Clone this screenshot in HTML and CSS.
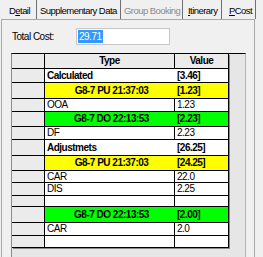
FILE: index.html
```html
<!DOCTYPE html>
<html lang="en">
<head>
    <meta charset="UTF-8">
    <title>PCost</title>
    <link rel="stylesheet" href="styles.css">
</head>
<body>

    <!-- Tab strip -->
    <div class="tabs">
        <div class="tab t-detail">D<u>e</u>tail</div>
        <div class="tab t-supp">Supplementary Data</div>
        <div class="tab t-group disabled">Group Booking</div>
        <div class="tab t-itin"><u>I</u>tinerary</div>
        <div class="tab t-pcost active"><u>P</u>Cost</div>
    </div>

    <!-- Tab page -->
    <div class="panel">
        <div class="total-row">
            <span class="total-label">Total Cost:</span>
            <div class="total-box"><span class="sel">29.71</span></div>
        </div>

        <div class="grid">
            <table class="cost-table">
                <tr class="head r15">
                    <td class="fixed"></td>
                    <td class="type-col">Type</td>
                    <td class="val-col">Value</td>
                </tr>
                <tr class="group r14">
                    <td class="fixed"></td>
                    <td class="merge left">Calculated</td>
                    <td class="val-col">[3.46]</td>
                </tr>
                <tr class="group yellow r16">
                    <td class="fixed"></td>
                    <td class="merge">G8-7 PU 21:37:03</td>
                    <td class="val-col">[1.23]</td>
                </tr>
                <tr class="r13">
                    <td class="fixed"></td>
                    <td>OOA</td>
                    <td class="val-col">1.23</td>
                </tr>
                <tr class="group green r15">
                    <td class="fixed"></td>
                    <td class="merge">G8-7 DO 22:13:53</td>
                    <td class="val-col">[2.23]</td>
                </tr>
                <tr class="r13">
                    <td class="fixed"></td>
                    <td>DF</td>
                    <td class="val-col">2.23</td>
                </tr>
                <tr class="group r16">
                    <td class="fixed"></td>
                    <td class="merge left">Adjustmets</td>
                    <td class="val-col">[26.25]</td>
                </tr>
                <tr class="group yellow r15">
                    <td class="fixed"></td>
                    <td class="merge">G8-7 PU 21:37:03</td>
                    <td class="val-col">[24.25]</td>
                </tr>
                <tr class="r12">
                    <td class="fixed"></td>
                    <td>CAR</td>
                    <td class="val-col">22.0</td>
                </tr>
                <tr class="r13">
                    <td class="fixed"></td>
                    <td>DIS</td>
                    <td class="val-col">2.25</td>
                </tr>
                <tr class="r11">
                    <td class="fixed"></td>
                    <td></td>
                    <td class="val-col"></td>
                </tr>
                <tr class="group green r16">
                    <td class="fixed"></td>
                    <td class="merge">G8-7 DO 22:13:53</td>
                    <td class="val-col">[2.00]</td>
                </tr>
                <tr class="r13">
                    <td class="fixed"></td>
                    <td>CAR</td>
                    <td class="val-col">2.0</td>
                </tr>
                <tr class="r12">
                    <td class="fixed"></td>
                    <td></td>
                    <td class="val-col"></td>
                </tr>
            </table>
        </div>
    </div>

</body>
</html>
```

FILE: styles.css
```css
/* Global */
* {
    margin: 0;
    padding: 0;
    box-sizing: border-box;
}

body {
    width: 263px;
    height: 257px;
    overflow: hidden;
    background-color: #f0f0f0;
    color: #000;
    font-family: "Liberation Sans", Arial, sans-serif;
    font-size: 10px;
    letter-spacing: -0.5px;
}

/* Tabs */
.tabs {
    display: flex;
    height: 19px;
}

.tab {
    display: flex;
    align-items: center;
    height: 19px;
    padding-top: 1px;
    border-right: 1px solid #6e6e6e;
    font-size: 9.5px;
    letter-spacing: -0.55px;
    white-space: nowrap;
    overflow: hidden;
}

.tab u {
    text-decoration: underline;
}

.t-detail { width: 37px; padding-left: 9px; }
.t-supp { width: 84px; padding-left: 3px; }
.t-group { width: 62px; padding-left: 3px; }
.t-itin { width: 39px; padding-left: 5px; }
.t-pcost { width: 34px; padding-left: 7px; }

.tab.disabled {
    color: #8a8a8a;
}

/* Tab page */
.panel {
    margin-left: 1px;
    width: 254px;
    height: 238px;
    border: 1px solid #a9a9a9;
    border-bottom: none;
    background-color: #f0f0f0;
}

.total-row {
    display: flex;
    align-items: center;
    height: 17px;
    margin-top: 8px;
}

.total-label {
    margin-left: 10px;
    width: 64px;
}

.total-box {
    width: 94px;
    height: 17px;
    border: 1px solid #c8c8c8;
    background-color: #fff;
    padding: 1px 0 0 1px;
}

.sel {
    display: inline-block;
    background-color: #3399ff;
    color: #fff;
    padding: 0 1px;
    line-height: 13px;
}

/* Grid */
.grid {
    margin: 8px 0 0 9px;
    width: 235px;
    height: 213px;
    border-left: 1px solid #8a8a8a;
    border-top: 1px solid #000;
    border-right: 1px solid #b4b4b4;
    background-color: #e6e6e6;
}

.cost-table {
    border-collapse: separate;
    border-spacing: 0;
    table-layout: fixed;
    width: 217px;
    box-shadow: 1px 1px 0 #8a8a8a;
}

.cost-table td {
    background-color: #fff;
    border-right: 1px solid #000;
    border-bottom: 1px solid #000;
    padding: 0 0 0 2px;
    text-align: left;
    white-space: nowrap;
    overflow: hidden;
    line-height: 10px;
}

.cost-table td.fixed {
    width: 33px;
    background-color: #ebebeb;
}

.cost-table tr td:nth-child(2) {
    width: 130px;
}

.cost-table td.val-col {
    width: 54px;
}

.head td {
    background-color: #ebebeb;
    font-weight: bold;
}

.cost-table .head td.type-col,
.cost-table .head td.val-col {
    text-align: center;
    padding: 0;
}

.group td {
    font-weight: bold;
}

.cost-table .group td.merge {
    border-right: none;
    text-align: center;
    padding: 0 0 0 3px;
}

.cost-table .group td.left {
    text-align: left;
    padding-left: 2px;
}

.yellow td:not(.fixed) {
    background-color: #ffff00;
}

.green td:not(.fixed) {
    background-color: #00ff00;
}

.r11 td { height: 11px; }
.r12 td { height: 12px; }
.r13 td { height: 13px; }
.r14 td { height: 14px; }
.r15 td { height: 15px; }
.r16 td { height: 16px; }
```
